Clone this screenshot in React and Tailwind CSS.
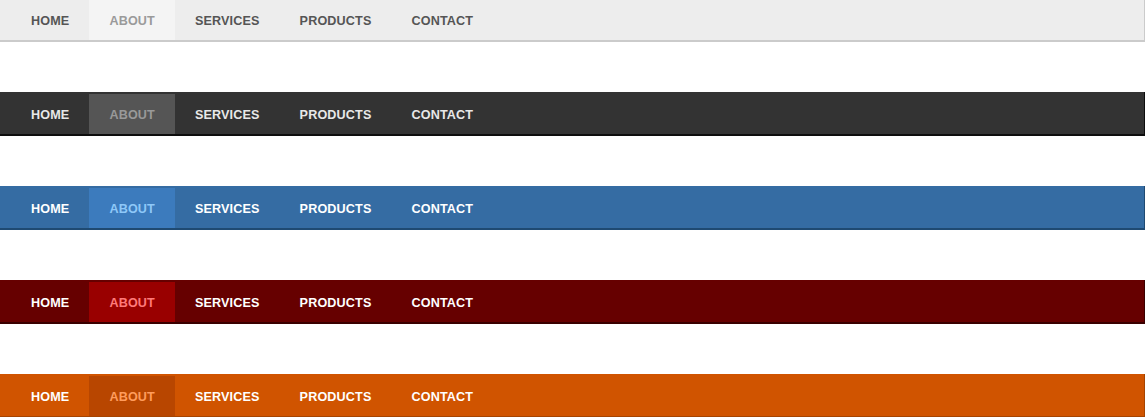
const items = ['Home', 'About', 'Services', 'Products', 'Contact'];

const themes = [
  {
    bar: 'bg-[#ededed] border-[#cbcbcb]',
    text: 'text-[#555555]',
    active: 'bg-[#f4f4f4] text-[#9a9a9a]',
  },
  {
    bar: 'bg-[#333333] border-[#0d0d0d]',
    text: 'text-[#e8e8e8]',
    active: 'bg-[#555555] text-[#999999]',
  },
  {
    bar: 'bg-[#356ca3] border-[#1f4a72]',
    text: 'text-white',
    active: 'bg-[#3c7bbd] text-[#8ec8f8]',
  },
  {
    bar: 'bg-[#660000] border-[#3a0000]',
    text: 'text-white',
    active: 'bg-[#990000] text-[#ff7a7a]',
  },
  {
    bar: 'bg-[#d05400] border-[#a64400]',
    text: 'text-white',
    active: 'bg-[#b84600] text-[#ff9c5c]',
  },
];

function NavBar({ theme }) {
  return (
    <nav className={`${theme.bar} w-[1145px] border-r border-b-2 pt-[2px]`}>
      <ul className="flex pl-[11px]">
        {items.map((item, i) => (
          <li key={item}>
            <a
              href="#"
              className={`block h-10 px-5 pt-[1px] leading-10 text-[12.6px] tracking-[0.15px] font-bold uppercase ${
                i === 1 ? theme.active : theme.text
              }`}
            >
              {item}
            </a>
          </li>
        ))}
      </ul>
    </nav>
  );
}

export default function App() {
  return (
    <div className="min-h-screen bg-white -mt-[2px] flex flex-col gap-[50px] font-['Liberation_Sans',Arial,sans-serif]">
      {themes.map((theme, i) => (
        <NavBar key={i} theme={theme} />
      ))}
    </div>
  );
}
